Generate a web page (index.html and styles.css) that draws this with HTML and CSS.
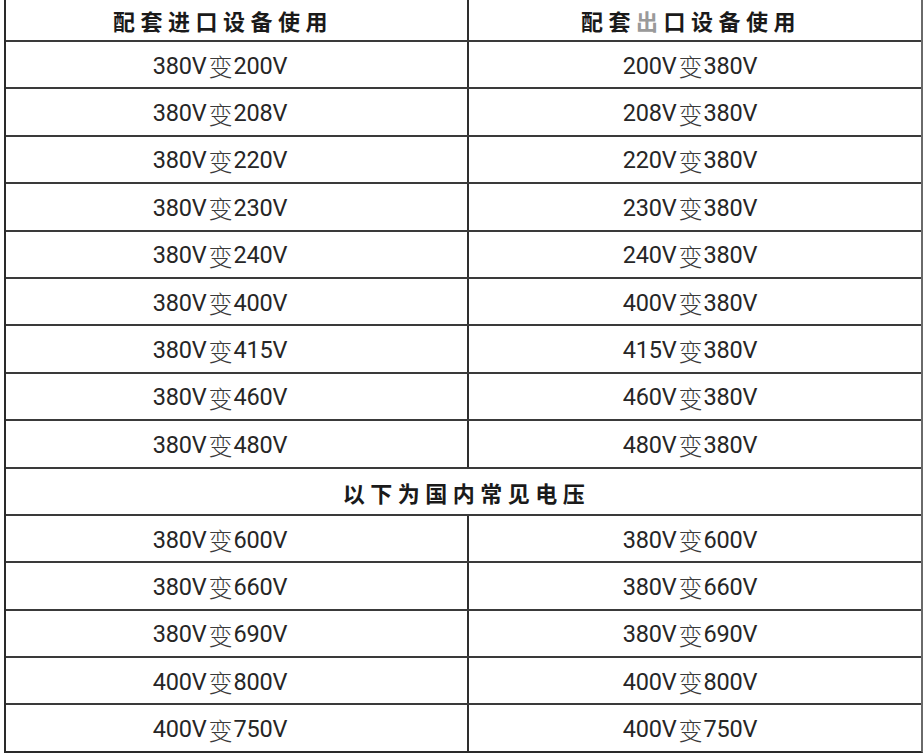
FILE: index.html
```html
<!DOCTYPE html>
<html lang="zh-CN">
<head>
<meta charset="utf-8">
<title>电压表</title>
<link rel="stylesheet" href="styles.css">
</head>
<body>
<div class="table">
  <div class="row head">
    <div class="cell left">配套进口设备使用</div>
    <div class="cell right">配套<span class="faint">出</span>口设备使用</div>
  </div>
  <div class="row"><div class="cell left">380V<span class="cn">变</span>200V</div><div class="cell right">200V<span class="cn">变</span>380V</div></div>
  <div class="row"><div class="cell left">380V<span class="cn">变</span>208V</div><div class="cell right">208V<span class="cn">变</span>380V</div></div>
  <div class="row"><div class="cell left">380V<span class="cn">变</span>220V</div><div class="cell right">220V<span class="cn">变</span>380V</div></div>
  <div class="row"><div class="cell left">380V<span class="cn">变</span>230V</div><div class="cell right">230V<span class="cn">变</span>380V</div></div>
  <div class="row"><div class="cell left">380V<span class="cn">变</span>240V</div><div class="cell right">240V<span class="cn">变</span>380V</div></div>
  <div class="row"><div class="cell left">380V<span class="cn">变</span>400V</div><div class="cell right">400V<span class="cn">变</span>380V</div></div>
  <div class="row"><div class="cell left">380V<span class="cn">变</span>415V</div><div class="cell right">415V<span class="cn">变</span>380V</div></div>
  <div class="row"><div class="cell left">380V<span class="cn">变</span>460V</div><div class="cell right">460V<span class="cn">变</span>380V</div></div>
  <div class="row"><div class="cell left">380V<span class="cn">变</span>480V</div><div class="cell right">480V<span class="cn">变</span>380V</div></div>
  <div class="row section"><div class="cell full">以下为国内常见电压</div></div>
  <div class="row"><div class="cell left">380V<span class="cn">变</span>600V</div><div class="cell right">380V<span class="cn">变</span>600V</div></div>
  <div class="row"><div class="cell left">380V<span class="cn">变</span>660V</div><div class="cell right">380V<span class="cn">变</span>660V</div></div>
  <div class="row"><div class="cell left">380V<span class="cn">变</span>690V</div><div class="cell right">380V<span class="cn">变</span>690V</div></div>
  <div class="row"><div class="cell left">400V<span class="cn">变</span>800V</div><div class="cell right">400V<span class="cn">变</span>800V</div></div>
  <div class="row last"><div class="cell left">400V<span class="cn">变</span>750V</div><div class="cell right">400V<span class="cn">变</span>750V</div></div>
</div>
</body>
</html>
```

FILE: styles.css
```css
html, body {
  margin: 0;
  padding: 0;
  background: #ffffff;
}

body {
  font-family: Roboto, "Liberation Sans", "Noto Sans CJK SC", sans-serif;
  color: #262626;
}

.table {
  margin-left: 4px;
  width: 919px;
  box-sizing: border-box;
  border-left: 2px solid #2a2a2a;
  border-right: 2px solid #6a6a6a;
  border-bottom: 2px solid #2a2a2a;
}

.row {
  display: grid;
  grid-template-columns: 461px 1fr;
  height: 47.4px;
  box-sizing: border-box;
  border-bottom: 2px solid #3a3a3a;
}

.row.head {
  height: 42px;
}

.row.last {
  border-bottom: none;
  height: 45.4px;
}

.row.section {
  grid-template-columns: 1fr;
}

.cell {
  display: flex;
  align-items: center;
  justify-content: center;
  font-size: 23.5px;
  letter-spacing: -0.2px;
  padding-top: 2px;
}

.cell.left {
  padding-right: 33px;
}

.cell.right {
  border-left: 2px solid #2e2e2e;
  padding-right: 10px;
}

.cn {
  font-family: "Noto Sans CJK SC", sans-serif;
  font-weight: 300;
  font-size: 24px;
  margin: 0 1px 0 2px;
  color: #3a3a3a;
}

.head .cell,
.section .cell {
  font-family: "Noto Sans CJK SC", sans-serif;
  font-weight: 600;
  font-size: 22px;
  letter-spacing: 5.5px;
  color: #1a1a1a;
}

.head .cell {
  padding-top: 0;
}

.head .cell.left {
  padding-right: 27px;
}

.head .cell.right {
  padding-right: 8px;
}

.section .cell {
  padding-left: 6px;
}

.faint {
  color: #9a9a9a;
}
```
